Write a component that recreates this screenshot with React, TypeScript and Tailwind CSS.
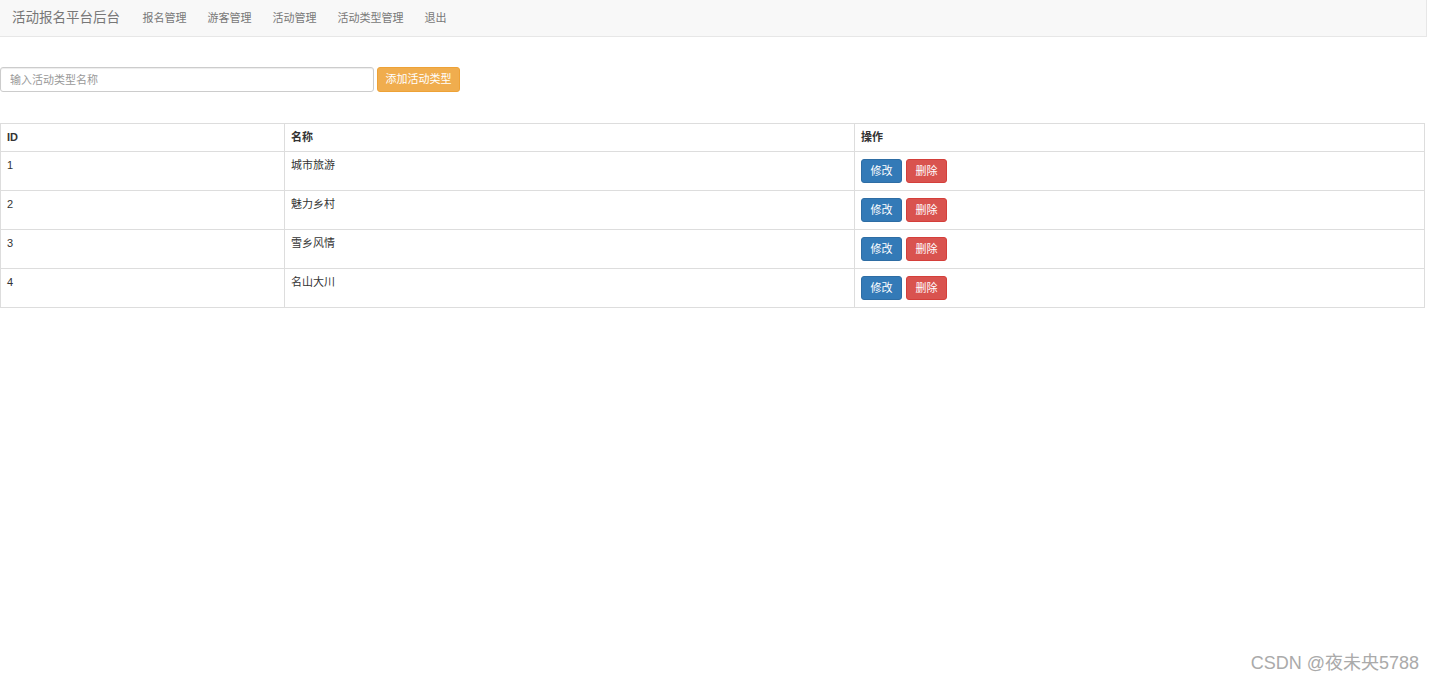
import React from "react";

const rows = [
  { id: 1, name: "城市旅游" },
  { id: 2, name: "魅力乡村" },
  { id: 3, name: "雪乡风情" },
  { id: 4, name: "名山大川" },
];

const navLinks = ["报名管理", "游客管理", "活动管理", "活动类型管理", "退出"];

export default function App() {
  return (
    <div
      className="relative h-[684px] w-[1434px] bg-white text-[11px] text-[#333]"
      style={{ fontFamily: '"Liberation Sans", "Noto Sans CJK SC", sans-serif' }}
    >
      <nav className="flex h-[37px] w-[1427px] items-center border-r border-b border-[#e7e7e7] bg-[#f8f8f8]">
        <span className="pl-[12px] pr-[12px] text-[13.5px] text-[#777]">活动报名平台后台</span>
        <ul className="flex">
          {navLinks.map((l) => (
            <li key={l} className="px-[10.5px] text-[11px] text-[#777]">
              {l}
            </li>
          ))}
        </ul>
      </nav>

      <div className="mt-[30px] flex gap-[3px]">
        <input
          placeholder="输入活动类型名称"
          className="h-[25px] w-[374px] rounded-[3px] border border-[#ccc] px-[9px] text-[11px] shadow-[inset_0_1px_1px_rgba(0,0,0,0.075)] placeholder:text-[#999]"
        />
        <button className="h-[25px] w-[83px] rounded-[3px] border border-[#eea236] bg-[#f0ad4e] text-[11px] text-white">
          添加活动类型
        </button>
      </div>

      <table className="mt-[31px] w-[1425px] table-fixed border-collapse border border-[#ddd]">
        <colgroup>
          <col className="w-[284px]" />
          <col className="w-[570px]" />
          <col />
        </colgroup>
        <thead>
          <tr>
            <th className="border border-[#ddd] px-[6px] py-[7px] text-left align-top text-[11px] leading-[13px] font-bold">ID</th>
            <th className="border border-[#ddd] px-[6px] py-[7px] text-left align-top text-[11px] leading-[13px] font-bold">名称</th>
            <th className="border border-[#ddd] px-[6px] py-[7px] text-left align-top text-[11px] leading-[13px] font-bold">操作</th>
          </tr>
        </thead>
        <tbody>
          {rows.map((r) => (
            <tr key={r.id}>
              <td className="border border-[#ddd] px-[6px] py-[7px] align-top leading-[13px]">{r.id}</td>
              <td className="border border-[#ddd] px-[6px] py-[7px] align-top leading-[13px]">{r.name}</td>
              <td className="border border-[#ddd] px-[6px] py-[7px] align-top">
                <div className="flex h-[24px] gap-[4px]">
                  <button className="h-[24px] w-[41px] rounded-[3px] border border-[#2e6da4] bg-[#337ab7] text-[11px] text-white">
                    修改
                  </button>
                  <button className="h-[24px] w-[41px] rounded-[3px] border border-[#d43f3a] bg-[#d9534f] text-[11px] text-white">
                    删除
                  </button>
                </div>
              </td>
            </tr>
          ))}
        </tbody>
      </table>

      <div className="absolute right-[15px] bottom-[7px] text-[18px] text-[#aaa]">CSDN @夜未央5788</div>
    </div>
  );
}
